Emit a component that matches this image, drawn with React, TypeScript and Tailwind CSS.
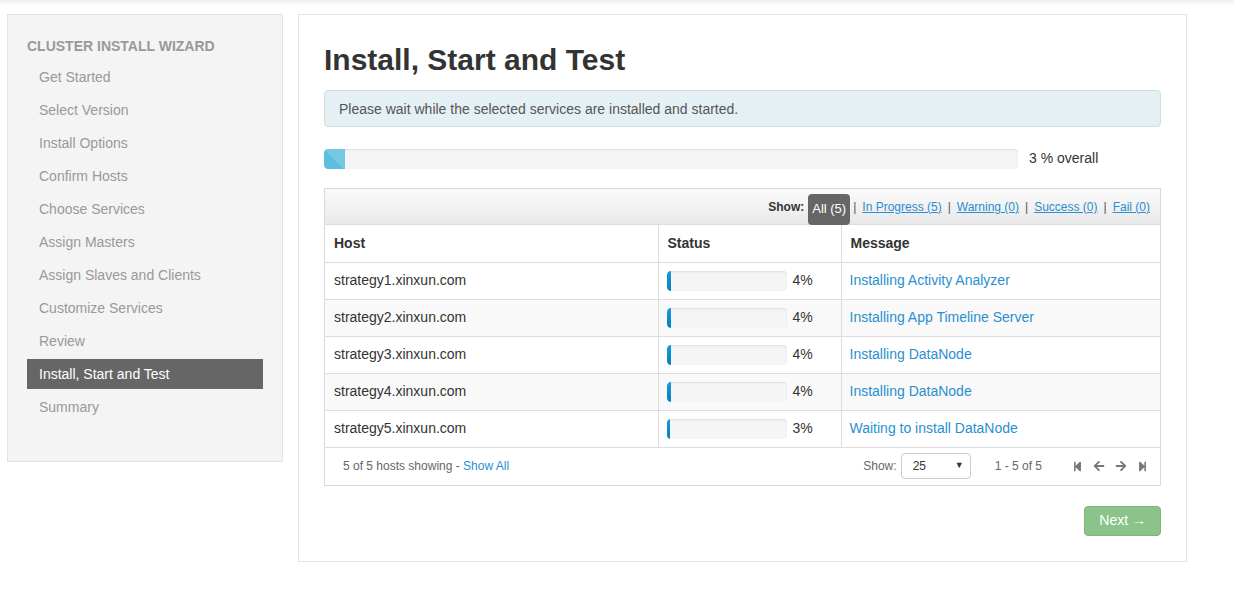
import React from "react";
import { FaStepBackward, FaStepForward, FaArrowLeft, FaArrowRight } from "react-icons/fa";

const steps = [
  "Get Started",
  "Select Version",
  "Install Options",
  "Confirm Hosts",
  "Choose Services",
  "Assign Masters",
  "Assign Slaves and Clients",
  "Customize Services",
  "Review",
  "Install, Start and Test",
  "Summary",
];

const hosts = [
  { name: "strategy1.xinxun.com", pct: 4, msg: "Installing Activity Analyzer" },
  { name: "strategy2.xinxun.com", pct: 4, msg: "Installing App Timeline Server" },
  { name: "strategy3.xinxun.com", pct: 4, msg: "Installing DataNode" },
  { name: "strategy4.xinxun.com", pct: 4, msg: "Installing DataNode" },
  { name: "strategy5.xinxun.com", pct: 3, msg: "Waiting to install DataNode" },
];

const filters = ["In Progress (5)", "Warning (0)", "Success (0)", "Fail (0)"];

const SideNav = () => (
  <div className="w-[276px] h-[448px] shrink-0 bg-[#f4f4f4] border border-[#e2e2e2] px-[19px] pt-[21px]">
    <div className="text-[14px] font-bold text-[#999] leading-[20px] mb-[6px]">CLUSTER INSTALL WIZARD</div>
    <ul>
      {steps.map((s) => {
        const active = s === "Install, Start and Test";
        return (
          <li
            key={s}
            className={`h-[30px] mb-[3px] pl-[12px] flex items-center text-[14px] ${
              active ? "bg-[#666] text-white" : "text-[#999]"
            }`}
          >
            {s}
          </li>
        );
      })}
    </ul>
  </div>
);

const MiniBar = ({ pct }: { pct: number }) => (
  <div className="flex items-center">
    <div className="w-[120px] h-[20px] rounded-[4px] bg-[#f5f5f5] shadow-[inset_0_1px_2px_rgba(0,0,0,0.1)] overflow-hidden">
      <div className="h-full rounded-l-[4px] bg-gradient-to-b from-[#149bdf] to-[#0480be]" style={{ width: `${pct}%` }} />
    </div>
    <span className="ml-[6px]">{pct}%</span>
  </div>
);

export default function App() {
  return (
    <div className="min-h-[602px] bg-white font-['Liberation_Sans',Arial,sans-serif] text-[#333] relative">
      <div className="absolute top-0 left-0 right-0 h-[6px] bg-gradient-to-b from-[#eee] to-white" />
      <div className="relative flex items-start gap-[15px] pt-[14px] pl-[7px]">
        <SideNav />
        <div className="w-[889px] h-[548px] border border-[#e3e3e3] bg-white px-[25px] pt-[27px]">
          <h2 className="text-[30px] font-bold leading-[36px] text-[#333] mb-[12px]">Install, Start and Test</h2>
          <div className="h-[37px] flex items-center px-[14px] pt-px bg-[#e5f0f5] border border-[#d2dde2] rounded-[4px] text-[14px] text-[#555]">
            Please wait while the selected services are installed and started.
          </div>
          <div className="flex items-center mt-[21px]">
            <div className="w-[694px] h-[20px] bg-[#f5f5f5] rounded-[4px] shadow-[inset_0_1px_2px_rgba(0,0,0,0.1)] overflow-hidden">
              <div
                className="h-full rounded-l-[4px] bg-[#5bc0de] bg-[linear-gradient(45deg,rgba(255,255,255,0.15)_25%,transparent_25%,transparent_50%,rgba(255,255,255,0.15)_50%,rgba(255,255,255,0.15)_75%,transparent_75%,transparent)] bg-[length:40px_40px]"
                style={{ width: "3%" }}
              />
            </div>
            <span className="ml-[11px] text-[14px]">3 % overall</span>
          </div>

          <div className="mt-[19px] border border-[#d9d9d9]">
            <div className="h-[36px] flex items-center justify-end pr-[10px] bg-gradient-to-b from-[#fbfbfb] to-[#e9e9e9] border-b border-[#ddd] text-[12px]">
              <span className="font-bold mr-[4px]">Show:</span>
              <span className="h-[31px] mt-[5px] px-[4px] flex items-center bg-[#666] text-white text-[13px] rounded-[4px]">All (5)</span>
              {filters.map((f, i) => (
                <React.Fragment key={f}>
                  <span className={`${i === 0 ? "ml-[3px]" : "ml-[6px]"} mr-[6px] text-[#555]`}>|</span>
                  <a className="text-[#2a8fd0] underline">{f}</a>
                </React.Fragment>
              ))}
            </div>
            <table className="w-full border-collapse text-[14px]">
              <thead>
                <tr className="h-[37px]">
                  <th className="w-[333px] text-left font-bold px-[9px] border-r border-b border-[#ddd]">Host</th>
                  <th className="w-[183px] text-left font-bold px-[9px] border-r border-b border-[#ddd]">Status</th>
                  <th className="text-left font-bold px-[9px] border-b border-[#ddd]">Message</th>
                </tr>
              </thead>
              <tbody>
                {hosts.map((h, i) => (
                  <tr key={h.name} className={`h-[37px] ${i % 2 === 1 ? "bg-[#f9f9f9]" : "bg-white"}`}>
                    <td className="px-[9px] border-r border-b border-[#ddd]">{h.name}</td>
                    <td className="px-[8px] border-r border-b border-[#ddd]">
                      <MiniBar pct={h.pct} />
                    </td>
                    <td className="px-[8px] border-b border-[#ddd] text-[#2a8fd0]">{h.msg}</td>
                  </tr>
                ))}
              </tbody>
            </table>
            <div className="h-[37px] flex items-center text-[12px] text-[#666] pl-[18px] pr-[12px]">
              <span>
                5 of 5 hosts showing - <a className="text-[#2a8fd0]">Show All</a>
              </span>
              <span className="ml-auto mr-[4px]">Show:</span>
              <div className="w-[70px] h-[26px] border border-[#ccc] rounded-[4px] flex items-center justify-between pl-[11px] pr-[6px] text-[#333]">
                <span>25</span>
                <span className="text-[9px]">▼</span>
              </div>
              <span className="ml-[24px] mr-[30px]">1 - 5 of 5</span>
              <div className="flex items-center gap-[10px] text-[#777]">
                <FaStepBackward size={11} />
                <FaArrowLeft size={12} />
                <FaArrowRight size={12} />
                <FaStepForward size={11} />
              </div>
            </div>
          </div>

          <div className="flex justify-end mt-[20px]">
            <button className="h-[30px] px-[14px] rounded-[4px] bg-[#8bc38a] border border-[#7fb87e] text-white text-[14px]">
              Next →
            </button>
          </div>
        </div>
      </div>
    </div>
  );
}
